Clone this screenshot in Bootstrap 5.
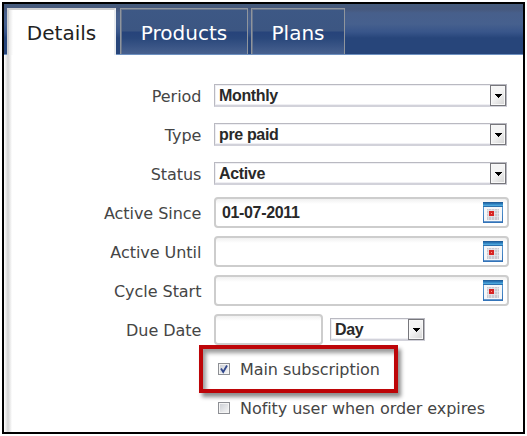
<!DOCTYPE html>
<html lang="en">
<head>
<meta charset="utf-8">
<title>Subscription details</title>
<link href="https://cdn.jsdelivr.net/npm/bootstrap@5.3.0/dist/css/bootstrap.min.css" rel="stylesheet">
<style>
body{background:#fff;width:527px;height:436px;overflow:hidden;font-family:"DejaVu Sans",Verdana,sans-serif;color:#454545}
.frame{width:523px;height:432px;margin:2px 0 0 2px;border:2px solid #000;background:#fff}
.topbar{height:51px;flex:none;padding:4px 0 0 3px;border-bottom:1px solid #6d90c0;background:linear-gradient(#455c7d 0,#46587c 5px,#475f8b 9px,#46608e 20px,#38558a 28px,#27457a 34px,#27457a 100%)}
.topbar .nav-link{height:46px;padding:0;border:1px solid #8f959d;border-bottom:0;border-radius:0;box-shadow:inset 0 1px #66748c,inset 1px 0 #66748c;color:#fff;font-size:20px;line-height:49px;text-align:center;background:linear-gradient(#3d5885 0,#3c5682 22px,#26437a 23px,#29477b 29px,#48618f 100%)}
.topbar .nav-link.active{height:47px;margin-bottom:-1px;border:2px solid #d0d0d0;border-right-color:#e9ecf0;border-bottom:0;box-shadow:none;line-height:47px;color:#222;background:linear-gradient(90deg,#e4e4e4,#fff 4px)}
.t-details{width:109px;margin-right:4px}
.t-products{width:128px;margin-right:3px}
.t-plans{width:94px}
.pane{padding:21px 0 0;background:linear-gradient(90deg,#fff 0,#e9e9e9 2px,#d3d3d3 4px,#e9e9e9 6px,#fff 8px)}
.frow{height:39px}
.flabel{width:198px;text-align:right;font-size:16px;letter-spacing:-.04px;line-height:22px;padding-top:3px;padding-right:.6px;margin-right:12px;white-space:nowrap}
.picker{width:293px;height:23px;border:1px solid #b9b9c1;border-bottom:2px solid #d2d2da;box-shadow:inset 0 0 0 1px #efeff3;background:#fff;padding-left:4px}
.picker.day{width:95px;margin-left:7px}
.val{font:bold 16px/21px "Liberation Sans",Arial,sans-serif;letter-spacing:-.35px;color:#292929}
.arrow{width:16px;height:21px;border:1px solid #77777c;box-shadow:inset 0 0 0 1px #f8f8f8;background:linear-gradient(135deg,#f5f5f5 45%,#d2d2d2)}
.field{width:295px;height:31px;border:2px solid #cdcdcd;border-radius:4px;padding:0 4px 0 6px;background:linear-gradient(#f0f0f0,#fff 5px)}
.field.due{width:109px}
.tick{width:12px;height:12px;border:1px solid #8d8f94;box-shadow:inset 0 0 0 1px #f4f4f4;background:linear-gradient(135deg,#c9ccd2,#f8f8f8);margin:0 10px 0 214px}
.tick svg{display:block}
.ctext{font-size:16px;letter-spacing:-.06px;line-height:22px;padding-top:3px;white-space:nowrap}
.callout{left:195px;top:341px;width:199px;height:48px;border:4px solid #bd0508;box-shadow:3px 4px 4px rgba(0,0,0,.45),inset 3px 4px 4px rgba(0,0,0,.4);pointer-events:none}
</style>
</head>
<body>
<svg width="0" height="0" class="position-absolute">
<defs>
<linearGradient id="head" x2="0" y2="1"><stop stop-color="#1b558f"/><stop offset=".5" stop-color="#2e7fc0"/><stop offset="1" stop-color="#58b4e4"/></linearGradient>
<linearGradient id="edge" x2="0" y2="1"><stop stop-color="#63a6dc"/><stop offset="1" stop-color="#316fb5"/></linearGradient>
<symbol id="cal" viewBox="0 0 20 21">
<rect x=".5" y="1" width="19" height="19.5" fill="#f5f7f9" stroke="url(#edge)"/>
<rect width="20" height="4" fill="url(#head)"/><path d="M0 4.500h20" stroke="#2b6fac"/>
<path d="M1 20h18" stroke="#3476bb" stroke-width="1.500"/>
<rect x="4" y="7" width="12" height="11" fill="#c9c9d0"/>
<path d="M4 8.500h12M4 11.500h12M4 14.500h12M5.500 7v11M8.500 7v11M11.500 7v11M14.500 7v11" stroke="#e6e6ec" stroke-width=".7"/>
<rect x="6" y="9" width="5" height="5" fill="#d72424"/><rect x="8" y="11" width="1" height="1" fill="#ff9a82"/>
</symbol>
<symbol id="down" viewBox="0 0 14 19"><path d="M4 8h7v1h-1v1h-1v1h-1v1h-1v-1h-1v-1h-1v-1h-1z" fill="#000"/></symbol>
</defs>
</svg>
<main class="frame d-flex flex-column position-relative">
<nav class="topbar nav d-flex flex-nowrap">
<a class="nav-link active t-details">Details</a><a class="nav-link t-products">Products</a><a class="nav-link t-plans">Plans</a>
</nav>
<form class="pane flex-grow-1">
<div class="frow d-flex align-items-center"><label class="flabel">Period</label><div class="picker d-flex justify-content-between"><span class="val">Monthly</span><span class="arrow"><svg class="d-block" width="14" height="19"><use href="#down"/></svg></span></div></div>
<div class="frow d-flex align-items-center"><label class="flabel">Type</label><div class="picker d-flex justify-content-between"><span class="val">pre paid</span><span class="arrow"><svg class="d-block" width="14" height="19"><use href="#down"/></svg></span></div></div>
<div class="frow d-flex align-items-center"><label class="flabel">Status</label><div class="picker d-flex justify-content-between"><span class="val">Active</span><span class="arrow"><svg class="d-block" width="14" height="19"><use href="#down"/></svg></span></div></div>
<div class="frow d-flex align-items-center"><label class="flabel">Active Since</label><div class="field d-flex align-items-center justify-content-between"><span class="val">01-07-2011</span><svg width="20" height="21"><use href="#cal"/></svg></div></div>
<div class="frow d-flex align-items-center"><label class="flabel">Active Until</label><div class="field d-flex align-items-center justify-content-end"><svg width="20" height="21"><use href="#cal"/></svg></div></div>
<div class="frow d-flex align-items-center"><label class="flabel">Cycle Start</label><div class="field d-flex align-items-center justify-content-end"><svg width="20" height="21"><use href="#cal"/></svg></div></div>
<div class="frow d-flex align-items-center"><label class="flabel">Due Date</label><div class="field due"></div><div class="picker day d-flex justify-content-between"><span class="val">Day</span><span class="arrow"><svg class="d-block" width="14" height="19"><use href="#down"/></svg></span></div></div>
<div class="frow d-flex align-items-center"><span class="tick"><svg width="10" height="10" viewBox="0 0 10 10"><path d="M2 4.500L4.200 8L8 1.500" fill="none" stroke="#31478c" stroke-width="1.800"/></svg></span><span class="ctext">Main subscription</span></div>
<div class="frow d-flex align-items-center"><span class="tick"></span><span class="ctext">Nofity user when order expires</span></div>
</form>
<div class="callout position-absolute"></div>
</main>
<script src="https://cdn.jsdelivr.net/npm/bootstrap@5.3.0/dist/js/bootstrap.bundle.min.js"></script>
</body>
</html>
